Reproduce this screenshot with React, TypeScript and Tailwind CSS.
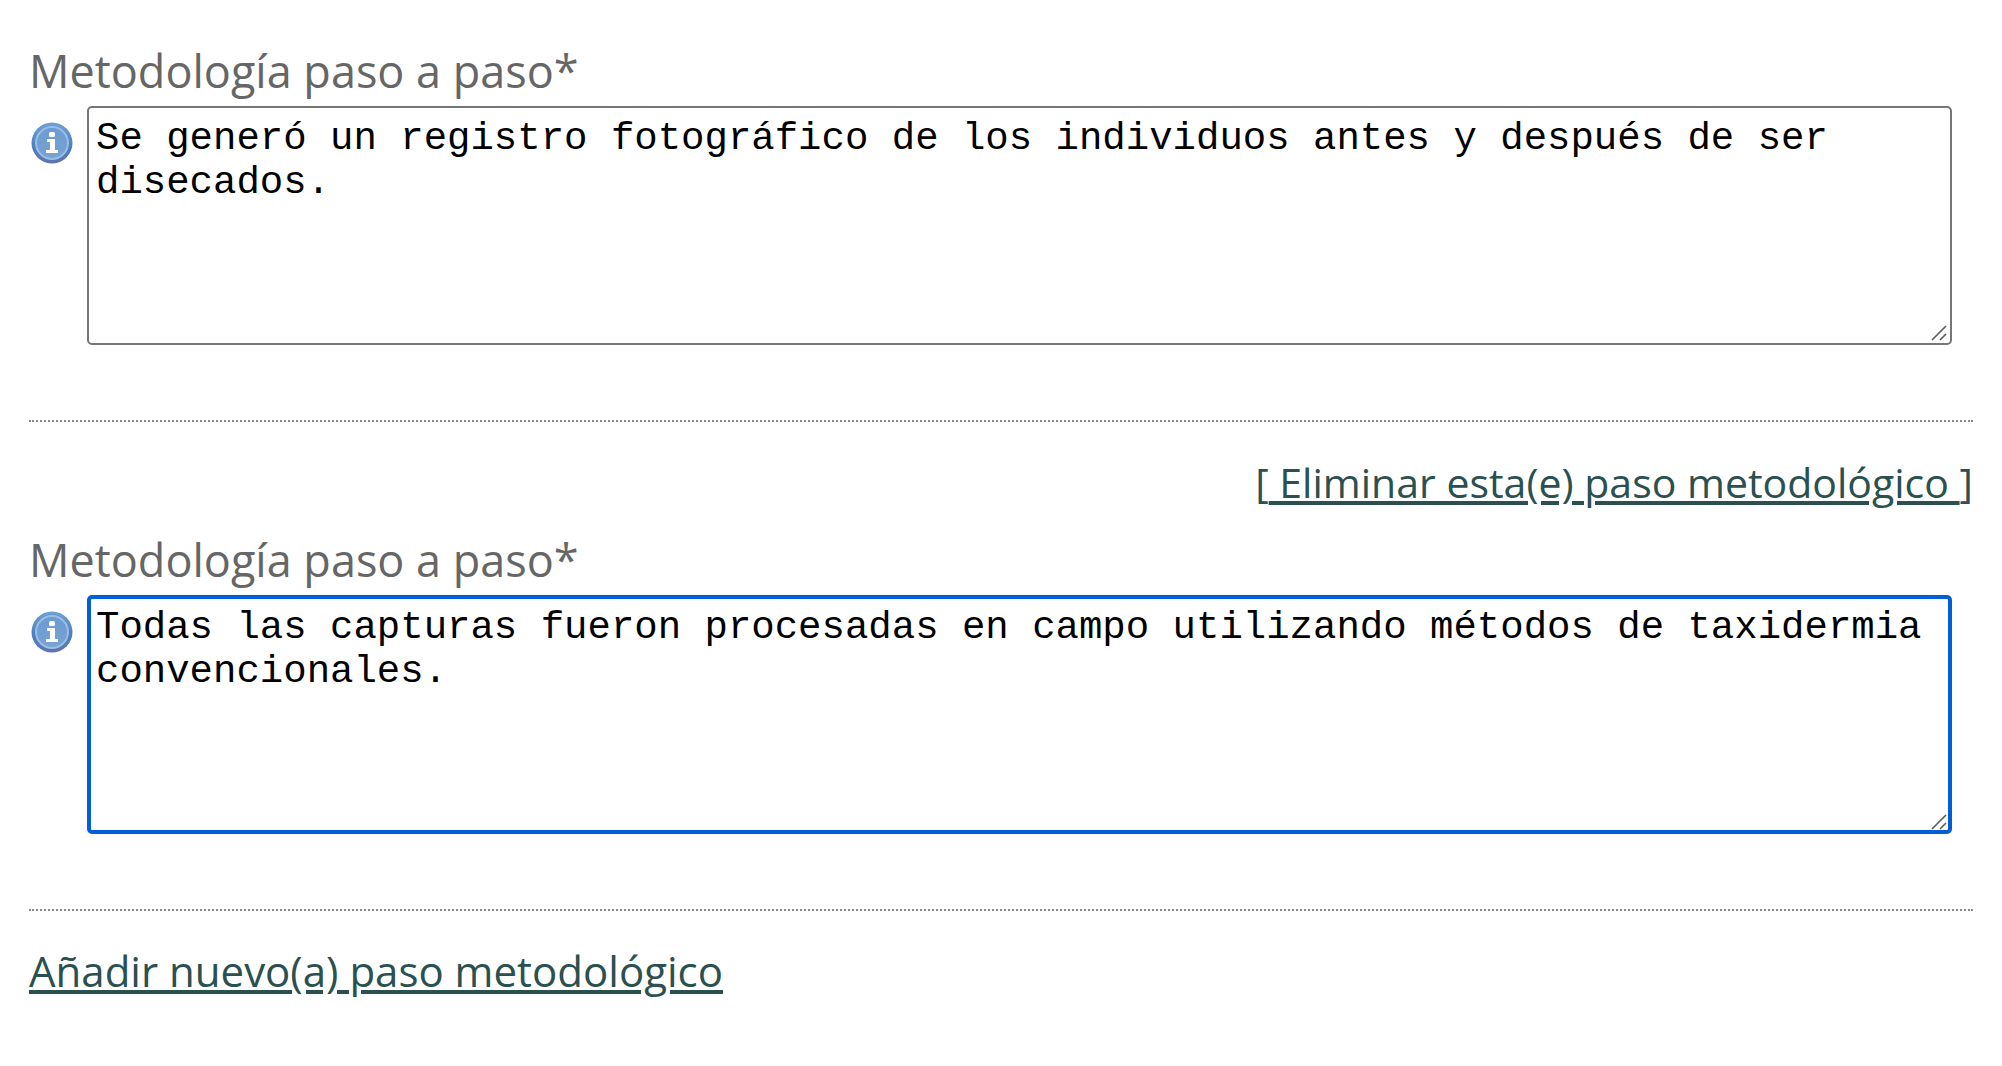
import React, { useId } from 'react';

function InfoIcon() {
  const id = useId();
  return (
    <svg viewBox="0 0 42 42" className="h-[42px] w-[42px]" aria-hidden="true">
      <defs>
        <linearGradient id={`${id}-rim`} x1="0" y1="0" x2="0" y2="1">
          <stop offset="0" stopColor="#6ba3d6" />
          <stop offset="0.6" stopColor="#4d7dbd" />
          <stop offset="1" stopColor="#6074b0" />
        </linearGradient>
        <linearGradient id={`${id}-face`} x1="0" y1="0" x2="0" y2="1">
          <stop offset="0" stopColor="#6a9bd2" />
          <stop offset="1" stopColor="#78a3d3" />
        </linearGradient>
      </defs>
      <circle cx="21" cy="21" r="20.5" fill={`url(#${id}-rim)`} />
      <circle cx="21" cy="21" r="16" fill={`url(#${id}-face)`} stroke="#9abde4" strokeWidth="2" />
      <rect x="18" y="10" width="6" height="5" rx="1.5" fill="#fff" />
      <path d="M16 17h8v11h3v3H15v-3h4v-8h-3z" fill="#fff" />
    </svg>
  );
}

type StepProps = { id: string; text: string; focused?: boolean };

function Step({ id, text, focused = false }: StepProps) {
  return (
    <section className="border-b-2 border-dotted border-[#888888] pb-[75px]">
      <label htmlFor={id} className="block pb-[5px] text-[45px] leading-[60px] text-[#666666]">
        Metodología paso a paso*
      </label>
      <div className="flex items-start pr-[21px]">
        <button type="button" aria-label="Ayuda" className="mt-4 mr-[14px] ml-[2px] shrink-0">
          <InfoIcon />
        </button>
        <div className="relative min-w-0 flex-1">
          <textarea
            id={id}
            defaultValue={text}
            spellCheck={false}
            className={
              focused
                ? 'block h-[239px] w-full resize-none rounded-[5px] border-4 border-[#005fd6] px-[5px] py-[7px] font-["Liberation_Mono",monospace] text-[39px] leading-[44px] text-black outline-none'
                : 'block h-[239px] w-full resize-none rounded-[5px] border-2 border-[#767676] px-[7px] py-[9px] font-["Liberation_Mono",monospace] text-[39px] leading-[44px] text-black outline-none'
            }
          />
          <svg
            viewBox="0 0 16 16"
            className="pointer-events-none absolute right-[5px] bottom-1 h-4 w-4"
            aria-hidden="true"
          >
            <path d="M1 15 15 1M9 15l6-6" fill="none" stroke="#5c5c5c" strokeWidth="1.6" />
          </svg>
        </div>
      </div>
    </section>
  );
}

export default function App() {
  return (
    <main className='bg-white px-[29px] pt-[41px] font-["Open_Sans",sans-serif]'>
      <Step id="paso-1" text="Se generó un registro fotográfico de los individuos antes y después de ser disecados." />
      <div className="flex justify-end pt-[30px] pb-[18px] text-[41px] leading-[60px] text-[#2a5050]">
        <span>
          [<a href="#eliminar" className="whitespace-pre underline"> Eliminar esta(e) paso metodológico </a>]
        </span>
      </div>
      <Step id="paso-2" text="Todas las capturas fueron procesadas en campo utilizando métodos de taxidermia convencionales." focused />
      <div className="pt-[30px] text-[42px] leading-[60px] text-[#2a5050]">
        <a href="#nuevo" className="underline">Añadir nuevo(a) paso metodológico</a>
      </div>
    </main>
  );
}
